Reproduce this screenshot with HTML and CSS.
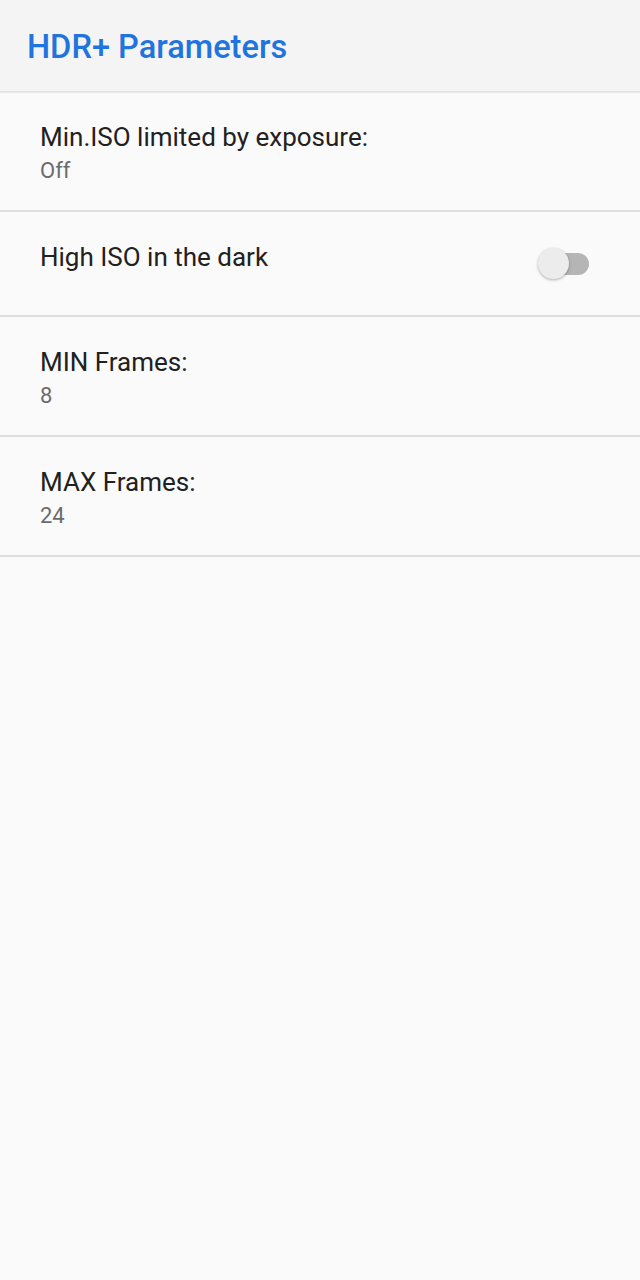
FILE: index.html
```html
<!DOCTYPE html>
<html lang="en">
<head>
    <meta charset="UTF-8">
    <meta name="viewport" content="width=device-width, initial-scale=1.0">
    <title>HDR+ Parameters</title>
    <link rel="stylesheet" href="styles.css">
</head>
<body>
    <div class="toolbar">
        <h1 class="toolbar-title">HDR+ Parameters</h1>
    </div>

    <div class="pref-list">
        <div class="pref">
            <div class="pref-text">
                <div class="pref-title">Min.ISO limited by exposure:</div>
                <div class="pref-summary">Off</div>
            </div>
        </div>
        <div class="pref pref-single">
            <div class="pref-text">
                <div class="pref-title">High ISO in the dark</div>
            </div>
            <div class="switch">
                <span class="switch-track"></span>
                <span class="switch-thumb"></span>
            </div>
        </div>
        <div class="pref">
            <div class="pref-text">
                <div class="pref-title">MIN Frames:</div>
                <div class="pref-summary">8</div>
            </div>
        </div>
        <div class="pref">
            <div class="pref-text">
                <div class="pref-title">MAX Frames:</div>
                <div class="pref-summary">24</div>
            </div>
        </div>
    </div>
</body>
</html>
```
FILE: styles.css
```css
body {
    margin: 0;
    font-family: Roboto, "Liberation Sans", sans-serif;
    background-color: #fafafa;
    min-height: 1280px;
}
.toolbar {
    height: 92px;
    background-color: #f4f4f4;
    border-bottom: 1px solid #e0e0e0;
    box-shadow: 0 1px 1px rgba(0,0,0,0.06);
    display: flex;
    align-items: center;
    padding: 2px 0 0 27px;
    box-sizing: border-box;
}
.toolbar-title {
    margin: 0;
    font-size: 32.6px;
    font-weight: 500;
    color: #1f74de;
}
.pref {
    display: flex;
    align-items: center;
    padding: 29px 51px 25px 40px;
    border-bottom: 2px solid #dedede;
}
.pref-single {
    height: 105px;
    box-sizing: border-box;
    align-items: flex-start;
}
.pref-text {
    flex: 1;
}
.pref-title {
    font-size: 26px;
    line-height: 32px;
    color: #212121;
}
.pref-summary {
    margin-top: 4px;
    font-size: 22px;
    line-height: 28px;
    color: #6b6b6b;
}
.switch {
    position: relative;
    width: 52px;
    height: 30px;
    margin-top: 8px;
}
.switch-track {
    position: absolute;
    right: 0;
    top: 4px;
    width: 44px;
    height: 22px;
    border-radius: 11px;
    background-color: #b5b5b5;
}
.switch-thumb {
    position: absolute;
    left: 1px;
    top: -1px;
    width: 31px;
    height: 31px;
    border-radius: 50%;
    background-color: #ececec;
    box-shadow: 0 1px 3px rgba(0,0,0,0.3);
}
```
